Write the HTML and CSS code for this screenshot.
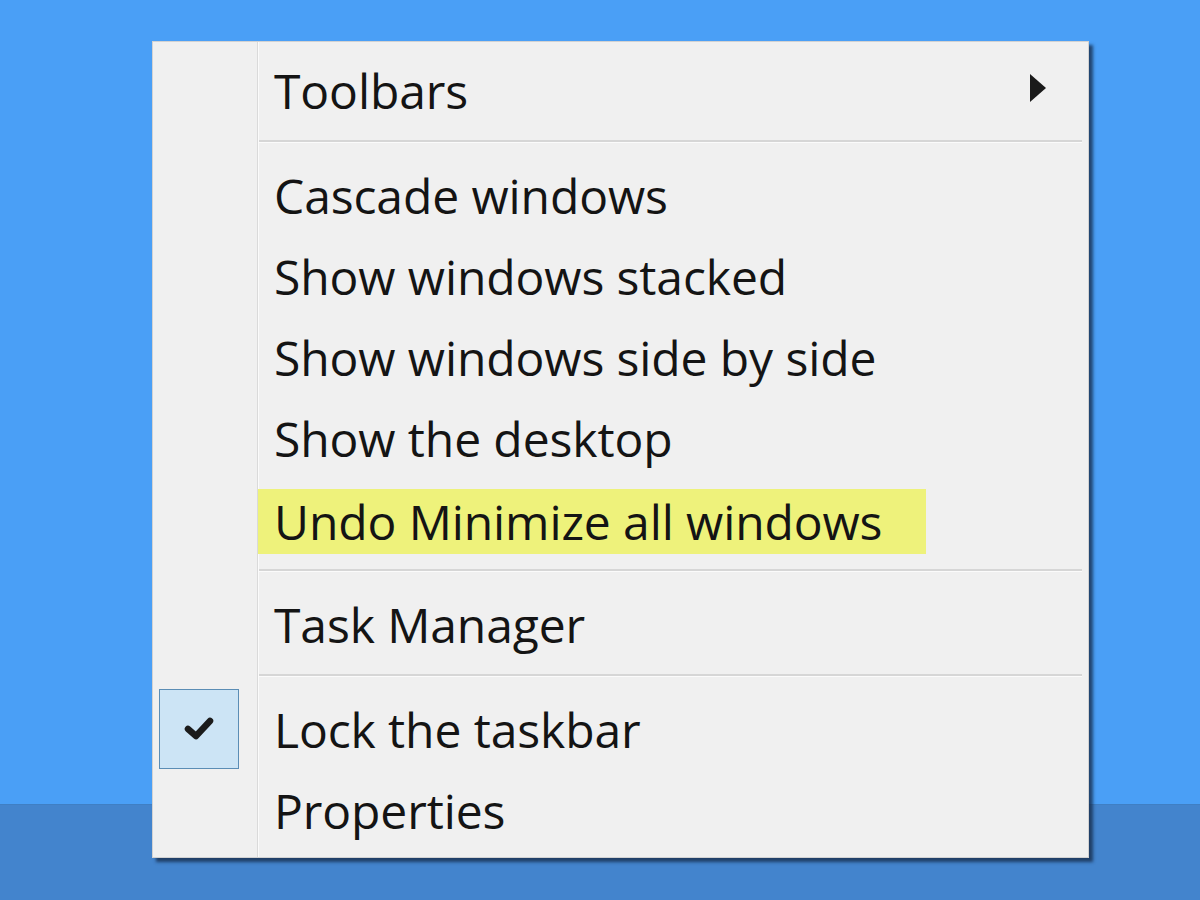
FILE: index.html
```html
<!DOCTYPE html>
<html>
<head>
<meta charset="utf-8">
<link rel="stylesheet" href="styles.css">
</head>
<body>
<div class="desktop">
  <div class="wallpaper"></div>
  <div class="taskbar"></div>
</div>
<div class="menu">
  <div class="item">
    <span class="gutter"></span>
    <span class="label">Toolbars</span>
    <svg class="arrow" width="18" height="30" viewBox="0 0 18 30"><polygon points="1,1 17,15 1,29" fill="#1a1a1a"/></svg>
  </div>
  <div class="sep"></div>
  <div class="item"><span class="gutter"></span><span class="label">Cascade windows</span></div>
  <div class="item"><span class="gutter"></span><span class="label">Show windows stacked</span></div>
  <div class="item"><span class="gutter"></span><span class="label">Show windows side by side</span></div>
  <div class="item"><span class="gutter"></span><span class="label">Show the desktop</span></div>
  <div class="item"><span class="gutter"></span><span class="label hl">Undo Minimize all windows</span></div>
  <div class="sep"></div>
  <div class="item"><span class="gutter"></span><span class="label">Task Manager</span></div>
  <div class="sep"></div>
  <div class="item">
    <span class="gutter"><span class="check"><svg width="40" height="40" viewBox="0 0 40 40"><path d="M9 20 L17 27 L31 12" fill="none" stroke="#1b1b1b" stroke-width="6.5" stroke-linecap="round" stroke-linejoin="round"/></svg></span></span>
    <span class="label">Lock the taskbar</span>
  </div>
  <div class="item"><span class="gutter"></span><span class="label">Properties</span></div>
</div>
</body>
</html>
```

FILE: styles.css
```css
html, body {
  margin: 0;
  padding: 0;
  width: 1200px;
  height: 900px;
  overflow: hidden;
}
.desktop {
  display: flex;
  flex-direction: column;
  height: 900px;
}
.wallpaper {
  flex: 1;
  background: #4a9ff6;
}
.taskbar {
  height: 95px;
  background: #4384cd;
  border-top: 1px solid #3f7fc4;
}
.menu {
  position: absolute;
  left: 152px;
  top: 41px;
  width: 935px;
  padding: 10px 0 4px 0;
  background:
    linear-gradient(to right, transparent 104px, #dadada 104px, #dadada 105px, #fbfbfb 105px, #fbfbfb 106px, transparent 106px),
    #f0f0f0;
  border: 1px solid #d2d2d2;
  box-shadow: 4px 4px 3px rgba(20, 40, 70, 0.75);
  font-family: "Open Sans", "Noto Sans", sans-serif;
  font-size: 48px;
  color: #141414;
}
.item {
  display: flex;
  align-items: center;
  height: 81px;
}
.gutter {
  width: 106px;
  flex: none;
  display: flex;
  align-items: center;
  justify-content: flex-start;
}
.label {
  padding-left: 15px;
  flex: 1;
  letter-spacing: -0.1px;
  white-space: nowrap;
  margin-top: -4px;
}
.label.hl {
  flex: none;
  background: #eef27b;
  height: 65px;
  line-height: 65px;
  padding-left: 16px;
  margin-left: -1px;
  padding-right: 44px;
  margin-top: 0;
}
.arrow {
  margin-right: 41px;
  margin-top: -10px;
}
.sep {
  height: 24px;
  margin-left: 106px;
  margin-right: 6px;
  background: linear-gradient(to bottom, transparent 7px, #d6d6d6 7px, #d6d6d6 9px, #fbfbfb 9px, #fbfbfb 10px, transparent 10px);
}
.check {
  margin-left: 6px;
  margin-top: -6px;
  width: 78px;
  height: 78px;
  background: #cce4f5;
  border: 1px solid #5b8db5;
  display: flex;
  align-items: center;
  justify-content: center;
}
```
